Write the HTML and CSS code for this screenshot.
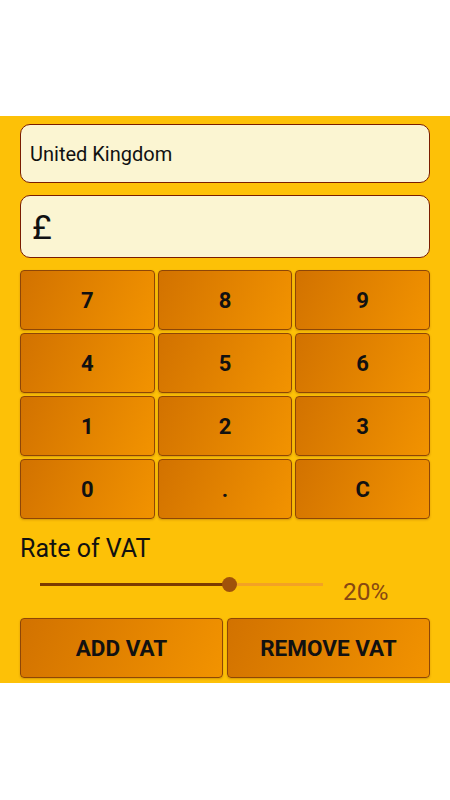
FILE: index.html
```html
<!DOCTYPE html>
<html lang="en">
<head>
    <meta charset="UTF-8">
    <meta name="viewport" content="width=device-width, initial-scale=1.0">
    <title>VAT Calculator</title>
    <link rel="stylesheet" href="styles.css">
</head>
<body>
    <div class="panel">
        <div class="field country">United Kingdom</div>
        <div class="field amount">£</div>
        <div class="keypad">
            <button class="key">7</button>
            <button class="key">8</button>
            <button class="key">9</button>
            <button class="key">4</button>
            <button class="key">5</button>
            <button class="key">6</button>
            <button class="key">1</button>
            <button class="key">2</button>
            <button class="key">3</button>
            <button class="key">0</button>
            <button class="key">.</button>
            <button class="key">C</button>
        </div>
        <div class="rate-label">Rate of VAT</div>
        <div class="rate-row">
            <div class="slider">
                <div class="track-fill"></div>
                <div class="thumb"></div>
            </div>
            <div class="rate-value">20%</div>
        </div>
        <div class="actions">
            <button class="key action">ADD VAT</button>
            <button class="key action">REMOVE VAT</button>
        </div>
    </div>
</body>
</html>
```

FILE: styles.css
```css
* {
    margin: 0;
    padding: 0;
    box-sizing: border-box;
}
body {
    font-family: Roboto, 'Liberation Sans', Arial, sans-serif;
    background: #fff;
    color: #111;
}
.panel {
    margin-top: 116px;
    background: #fdc107;
    padding: 8px 20px 5px 20px;
}
.field {
    background: #fbf5d2;
    border: 1px solid #7a1c00;
    border-radius: 10px;
    padding: 0 9px;
    display: flex;
    align-items: center;
}
.country {
    height: 59px;
    font-size: 20px;
}
.amount {
    height: 63px;
    margin-top: 12px;
    font-size: 34px;
    padding-left: 11px;
}
.keypad {
    margin-top: 12px;
    display: grid;
    grid-template-columns: repeat(3, 1fr);
    grid-auto-rows: 60px;
    gap: 3px;
}
.key {
    font-family: inherit;
    background: linear-gradient(115deg, #d27200, #f29300);
    border: 1px solid #8e4606;
    border-radius: 4px;
    font-size: 22px;
    font-weight: 700;
    color: #111;
    box-shadow: 0 1px 2px rgba(120, 60, 0, 0.3);
}
.rate-label {
    margin-top: 15px;
    font-size: 25px;
    line-height: 30px;
}
.rate-row {
    display: flex;
    align-items: center;
    height: 50px;
    margin-top: 1px;
}
.slider {
    position: relative;
    margin-left: 20px;
    width: 283px;
    height: 3px;
    background: #f3a224;
    margin-top: -12px;
}
.track-fill {
    width: 189px;
    height: 100%;
    background: #7c3a00;
}
.thumb {
    position: absolute;
    left: 182px;
    top: -6px;
    width: 15px;
    height: 15px;
    border-radius: 50%;
    background: #a0520a;
}
.rate-value {
    margin-left: 20px;
    font-size: 24.5px;
    color: #874812;
    margin-top: 2px;
}
.actions {
    margin-top: 3px;
    display: grid;
    grid-template-columns: 1fr 1fr;
    gap: 4px;
}
.action {
    height: 60px;
    font-size: 22.5px;
}
```
